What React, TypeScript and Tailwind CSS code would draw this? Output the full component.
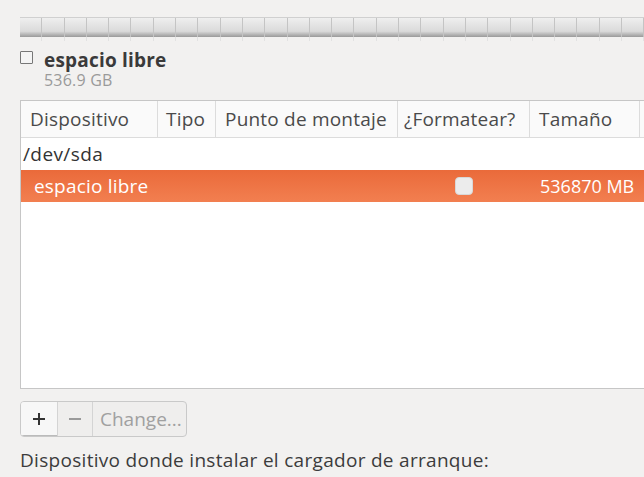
import React from 'react';

const segmentos = Array.from({ length: 30 });

export default function App() {
  return (
    <div
      className="w-[644px] h-[477px] overflow-hidden bg-[#f2f1f0] text-[#3c3c3c]"
      style={{ fontFamily: '"Open Sans", "Noto Sans", sans-serif' }}
    >
      <div className="pl-[20px] pt-[17px] w-[700px]">
        {/* Barra de particiones */}
        <div className="flex h-[20px] border-t border-[#d0d0d0]">
          {segmentos.map((_, i) => (
            <div
              key={i}
              className="w-[22.3px] shrink-0 border-r border-[#c4c4c4] bg-linear-to-b from-[#efefef] via-[#dadada] via-70% to-[#9a9a9a]"
            />
          ))}
        </div>
        <div className="flex h-[4px]">
          {segmentos.map((_, i) => (
            <div key={i} className="w-[22.3px] shrink-0 border-r border-[#e2e2e2]" />
          ))}
        </div>

        {/* Leyenda */}
        <div className="flex items-start mt-[8px]">
          <div className="w-[13px] h-[13px] mt-[2px] border border-[#777] bg-[#f4f4f4] rounded-[1px]" />
          <div className="ml-[11px]">
            <div className="text-[19px] leading-[22px] font-bold tracking-[0.2px] text-[#3a3a3a]">espacio libre</div>
            <div className="text-[16px] leading-[18px] text-[#9a9a9a] tracking-[0.2px]">536.9 GB</div>
          </div>
        </div>

        {/* Tabla */}
        <div className="mt-[11px] w-[680px] h-[289px] border border-[#c6c6c6] bg-white">
          <div className="flex h-[37px] border-b border-[#dcdcdc] bg-[#fafafa] text-[19px] leading-[24px] text-[#4a4a4a] tracking-[0.2px]">
            <div className="w-[137px] px-[9px] flex items-center border-r border-[#dcdcdc] whitespace-nowrap">Dispositivo</div>
            <div className="w-[58px] px-[8px] flex items-center border-r border-[#dcdcdc] whitespace-nowrap">Tipo</div>
            <div className="w-[182px] px-[9px] flex items-center border-r border-[#dcdcdc] whitespace-nowrap">Punto de montaje</div>
            <div className="w-[132px] px-[6px] flex items-center border-r border-[#dcdcdc] whitespace-nowrap">¿Formatear?</div>
            <div className="w-[110px] px-[9px] flex items-center border-r border-[#dcdcdc] whitespace-nowrap">Tamaño</div>
            <div className="flex-1" />
          </div>
          <div className="h-[32px] flex items-center px-[2px] text-[19px] leading-[24px] text-[#333] tracking-[0.4px]">/dev/sda</div>
          <div className="h-[32px] flex items-center bg-linear-to-b from-[#ea6a3a] to-[#f27f50] text-white text-[19px] leading-[24px] tracking-[0.2px]">
            <div className="w-[434px] pl-[13px] whitespace-nowrap">espacio libre</div>
            <div className="w-[85px]">
              <div className="w-[18px] h-[18px] rounded-[4px] bg-[#ececec] border border-[#d8d8d8]" />
            </div>
            <div className="whitespace-nowrap text-[18px] tracking-[0px]">536870 MB</div>
          </div>
        </div>

        {/* Botones */}
        <div className="mt-[12px] flex h-[36px] w-[167px] rounded-[4px] border border-[#c9c9c9] bg-[#efeeed] overflow-hidden">
          <div className="w-[37px] flex items-center justify-center bg-[#f7f7f7] border-r border-[#d4d4d4] shadow-[inset_0_-1px_0_#bbb]">
            <svg width="14" height="14" viewBox="0 0 14 14">
              <path d="M7 1v12M1 7h12" stroke="#333" strokeWidth="2" />
            </svg>
          </div>
          <div className="w-[35px] flex items-center justify-center border-r border-[#d4d4d4]">
            <svg width="14" height="14" viewBox="0 0 14 14">
              <path d="M1 7h12" stroke="#9a9a9a" strokeWidth="2" />
            </svg>
          </div>
          <div className="flex-1 flex items-center pl-[7px] text-[19px] leading-[24px] text-[#a0a0a0] whitespace-nowrap">Change...</div>
        </div>

        <div className="mt-[11px] text-[19px] leading-[24px] text-[#3c3c3c] tracking-[0.3px] whitespace-nowrap">
          Dispositivo donde instalar el cargador de arranque:
        </div>
      </div>
    </div>
  );
}
